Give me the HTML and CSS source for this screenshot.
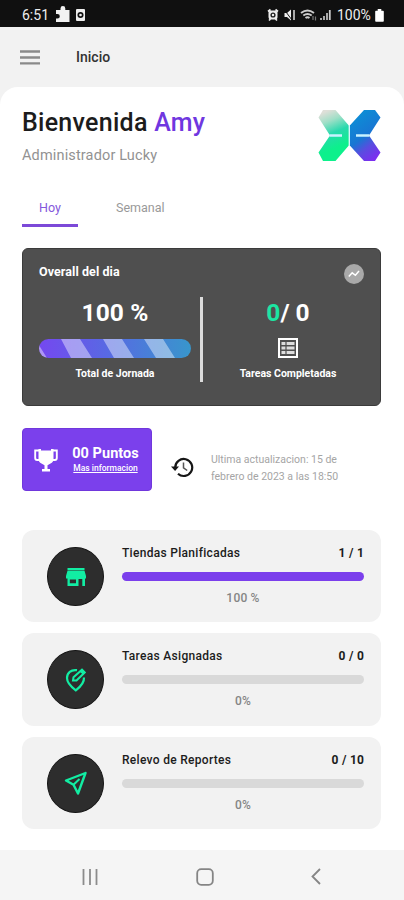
FILE: index.html
```html
<!DOCTYPE html>
<html lang="es">
<head>
<meta charset="utf-8">
<title>Inicio</title>
<link rel="stylesheet" href="styles.css">
</head>
<body>
<div class="status">
  <span class="clock">6:51</span>
  <svg class="puzzle" width="16" height="18" viewBox="0 0 16 18"><path d="M1 5h4.500V3.500a2.400 2.400 0 0 1 4.800 0V5H14.500V17H1V13.500h1.500a2.300 2.300 0 0 0 0-4.600H1z" fill="#f2f2f2"/></svg>
  <svg class="app" width="9" height="12" viewBox="0 0 9 12"><rect width="9" height="12" rx="1" fill="#eee"/><circle cx="4.500" cy="6" r="2.200" fill="#eee" stroke="#111" stroke-width="1.700"/></svg>
  <svg class="tray" width="66" height="14" viewBox="0 0 66 14">
    <path d="M1 3.500 3.500 1.500M11 3.500 8.500 1.500M2 12.500l1.500-1.500M10 12.500 8.500 11" stroke="#eee" stroke-width="1.700"/><rect x="1.500" y="2.500" width="9" height="9" rx="2.500" fill="#eee"/><circle cx="6" cy="7" r="1.900" fill="none" stroke="#222" stroke-width="1.400"/>
    <path d="M17.500 5h2.500l4-3.500v11L20 9h-2.500z" fill="#eee"/><path d="M17.500 2 25 12" stroke="#111" stroke-width="1"/><path d="M27 2v10" stroke="#ddd" stroke-width="1.500"/>
    <g fill="none" stroke="#ccc" stroke-width="1.900"><path d="M34 5q6.500-5 13 0M36.300 7.500q4.200-3 8.400 0M38.500 10q2-1.500 4 0"/></g><path d="M46 8v4M48.500 8.500v4" stroke="#777" stroke-width="1.200"/>
    <path d="M54 12v-2M57 12V8M60 12V5" stroke="#aaa" stroke-width="2"/><path d="M62.800 12V2" stroke="#ccc" stroke-width="1.800"/>
  </svg>
  <span class="charge">100%</span>
  <svg width="9" height="13" viewBox="0 0 9 13"><path d="M2.700 0h3.600v1.700H8q.8 0 .8.800V12q0 .8-.8.800H1Q.2 12.800.2 12V2.500q0-.8.800-.8h1.700z" fill="#fff"/></svg>
</div>
<header class="topbar">
  <svg width="20" height="15" viewBox="0 0 20 15"><path d="M0 1.500h20M0 7.500h20M0 13.300h20" stroke="#8a8a8a" stroke-width="2.300"/></svg>
  <span class="page">Inicio</span>
</header>
<main class="sheet">
  <section class="welcome">
    <div>
      <h1>Bienvenida <em>Amy</em></h1>
      <p class="role">Administrador Lucky</p>
    </div>
    <svg class="logo" width="64" height="53" viewBox="0 0 64 53">
      <defs>
        <linearGradient id="lg" x1=".15" y1="0" x2=".4" y2="1"><stop offset=".05" stop-color="#dedfd8"/><stop offset=".25" stop-color="#a0dfc7"/><stop offset=".5" stop-color="#27d9ad"/><stop offset=".8" stop-color="#0df08c"/></linearGradient>
        <linearGradient id="rg" x1=".3" y1="0" x2=".75" y2="1"><stop offset=".1" stop-color="#0e8bd5"/><stop offset=".5" stop-color="#1976d3"/><stop offset=".72" stop-color="#5a4ce0"/><stop offset="1" stop-color="#7d2df0"/></linearGradient>
      </defs>
      <path d="M1.500 8.500 6 1h12.500L31.800 16.500v20L18.500 52H6L1.500 43.500 13 26.500z" fill="url(#lg)"/>
      <path d="M63.500 8.500 58 1H47L32.800 16.500v20L47 52h11l5.500-8.500L52 26.500z" fill="url(#rg)"/>
      <path d="M12.500 26.500h12.500M39 26.500h13.500" stroke="#c9f2ff" stroke-width="2.600"/><path d="M32.300 16v21" stroke="#d5f5ff" stroke-width="1"/>
    </svg>
  </section>
  <nav class="tabs"><span class="tab active">Hoy</span><span class="tab">Semanal</span></nav>
  <section class="overall">
    <div class="overall-head">
      <h2>Overall del dia</h2>
      <svg width="20" height="20" viewBox="0 0 20 20"><circle cx="10" cy="10" r="10" fill="#a9a9a9"/><path d="m4.800 12.500 3.400-3.700 3.200 2.500L15 7" fill="none" stroke="#fff" stroke-width="1.500"/></svg>
    </div>
    <div class="overall-body">
      <div class="stat">
        <strong class="num workday">100 %</strong>
        <svg class="stripes" width="152" height="19" viewBox="0 0 152 19">
          <defs><linearGradient id="bar"><stop stop-color="#7548ef"/><stop offset=".45" stop-color="#5869e3"/><stop offset="1" stop-color="#3896cc"/></linearGradient></defs>
          <rect width="152" height="19" fill="url(#bar)"/>
          <path d="M-18 0H-4L8 19H-10zM22 0H41L53 19H32zM64 0H83L95 19H75zM105 0H124L136 19H117z" fill="#fff" opacity=".42"/>
        </svg>
        <span class="cap">Total de Jornada</span>
      </div>
      <div class="rule"></div>
      <div class="stat">
        <strong class="num"><em>0</em>/ 0</strong>
        <svg class="table" width="20" height="20" viewBox="0 0 20 20"><rect x="1" y="1" width="18" height="18" fill="#4f4f4f" stroke="#fff" stroke-width="2"/><path d="M3.500 5.500H16.500M3.500 10H16.500M3.500 14.500H16.500" stroke="#ddd" stroke-width="2.800"/><path d="M8 3v14" stroke="#4f4f4f" stroke-width="1.200"/></svg>
        <span class="cap">Tareas Completadas</span>
      </div>
    </div>
  </section>
  <section class="info">
    <div class="points">
      <svg width="24" height="24" viewBox="0 0 24 24"><path d="M5 2.500H1.200V10q0 2 2 2H7M19 2.500h3.800V10q0 2-2 2H17" fill="none" stroke="#fff" stroke-width="1.900"/><path d="M4.500 1H7v1.500h10V1h2.500v10q0 3-3 4.500l-3 1.700V21H16v2.500H8V21h2.500v-3.800l-3-1.700Q4.500 14 4.500 11z" fill="#fff"/></svg>
      <div class="points-text"><strong>00 Puntos</strong><a>Mas informacion</a></div>
    </div>
    <svg class="history" width="23" height="21" viewBox="0 0 23 21"><path d="M4.200 10.500A8.500 8.500 0 1 1 7 16.800" fill="none" stroke="#161616" stroke-width="2.200"/><path d="M0 9.500H8L4.100 14z" fill="#161616"/><path d="M12.500 5.500v5.300l3.700 2.700" fill="none" stroke="#555" stroke-width="1.500"/></svg>
    <p class="updated">Ultima actualizacion: 15 de<br>febrero de 2023 a las 18:50</p>
  </section>
  <section class="list">
    <article class="item">
      <div class="disc"><svg width="20" height="20" viewBox="0 0 20 20"><path d="M1.500 1h17v2.200h-17zM1.500 3.800h17L20 9v2.500h-1V19h-2.700v-7h-3.800v7h-11v-7.500H0V9zM3.800 12.500v3.700h6.200v-3.700z" fill="#12eda3" fill-rule="evenodd"/></svg></div>
      <div class="detail"><div class="row"><span>Tiendas Planificadas</span><b>1 / 1</b></div><div class="bar full"></div><span class="pct">100 %</span></div>
    </article>
    <article class="item">
      <div class="disc"><svg width="22" height="24" viewBox="0 0 22 24"><path d="M12 2.200C6 1.200 2 5 2 10c0 4 3 8 8.800 12.300C16.500 18 19.300 14 19 9.500" fill="none" stroke="#12eda3" stroke-width="2.200"/><path d="m8 12.500.5-3.300 8.500-7.500 2.700 2.700-8.200 8z" fill="none" stroke="#12eda3" stroke-width="2"/><path d="m15 4 2.500-2.800 3 3L18 6.500z" fill="#12eda3"/></svg></div>
      <div class="detail"><div class="row"><span>Tareas Asignadas</span><b>0 / 0</b></div><div class="bar"></div><span class="pct">0%</span></div>
    </article>
    <article class="item">
      <div class="disc"><svg width="24" height="25" viewBox="0 0 24 25"><path d="M21.500 2 2 9.500l7.500 4.300L14 22.500z" fill="none" stroke="#12eda3" stroke-width="2.400" stroke-linejoin="round"/><path d="m9.500 13.800 6-5.800" stroke="#12eda3" stroke-width="2"/></svg></div>
      <div class="detail"><div class="row"><span>Relevo de Reportes</span><b>0 / 10</b></div><div class="bar"></div><span class="pct">0%</span></div>
    </article>
  </section>
</main>
<footer class="nav">
  <svg width="16" height="16" viewBox="0 0 16 16"><path d="M1.500 0v16M8 0v16M14.500 0v16" stroke="#8c8c8c" stroke-width="1.800"/></svg>
  <svg width="18" height="18" viewBox="0 0 18 18"><rect x="1.200" y="1.200" width="15.600" height="15.600" rx="4" fill="none" stroke="#858585" stroke-width="1.800"/></svg>
  <svg width="10" height="17" viewBox="0 0 10 17"><path d="M9 1 1.500 8.500 9 16" fill="none" stroke="#858585" stroke-width="1.800"/></svg>
</footer>
</body>
</html>
```

FILE: styles.css
```css
* { box-sizing: border-box; margin: 0; padding: 0; }
body { width: 404px; height: 900px; overflow: hidden; background: #f2f2f2; font-family: Roboto, "Liberation Sans", sans-serif; display: flex; flex-direction: column; color: #1c1c1c; }
svg { display: block; flex: none; }
em { font-style: normal; }
span, strong, h1, h2, b, a { white-space: nowrap; }

.status { height: 27px; flex: none; background: #101010; color: #eee; display: flex; align-items: center; padding: 3px 20px 0 22px; }
.clock { font-size: 14px; width: 27px; }
.puzzle { margin: -2px 5px 0 6px; }
.tray { margin-left: auto; margin-right: 4px; }
.charge { font-size: 14px; width: 35px; margin-right: 3px; }

.topbar { height: 60px; flex: none; display: flex; align-items: center; padding-left: 20px; }
.page { font-size: 14px; font-weight: 500; color: #333; margin-left: 36px; }

.sheet { flex: 1; background: #fff; border-radius: 18px 18px 0 0; padding: 0 23px 0 22px; }
.welcome { height: 99px; display: flex; justify-content: space-between; padding-top: 20px; }
h1 { font-size: 25px; line-height: 30px; font-weight: 500; letter-spacing: .27px; padding-top: 1px; }
h1 em { color: #7037e0; }
.role { font-size: 14.5px; line-height: 20px; color: #929292; margin-top: 8px; letter-spacing: .15px; }
.logo { margin-top: 2px; }

.tabs { height: 41px; display: flex; gap: 22px; }
.tab { height: 41px; padding: 14px 16px 0; font-size: 12.5px; line-height: 16px; color: #999; }
.tab.active { width: 56px; padding-left: 17px; color: #8458dc; border-bottom: 3px solid #7c49d8; }

.overall { height: 158px; margin-top: 21px; background: #4f4f4f; border: 1px solid #3b3b3b; border-radius: 6px; color: #fff; padding: 15px 16px 0; }
.overall-head { display: flex; justify-content: space-between; height: 33px; }
h2 { font-size: 12.5px; line-height: 16px; font-weight: 700; letter-spacing: .07px; }
.overall-body { display: flex; }
.stat { width: 152px; display: flex; flex-direction: column; align-items: center; }
.num { font-size: 24.5px; line-height: 31px; font-weight: 700; }
.workday { letter-spacing: .15px; }
.num em { color: #1ce5a3; }
.stripes { margin-top: 11px; border-radius: 10px; }
.table { margin-top: 10px; }
.cap { font-size: 10.5px; line-height: 14px; font-weight: 700; margin-top: 9px; }
.rule { width: 3px; height: 85px; background: #dcdcdc; margin: 0 9px; }

.info { display: flex; height: 63px; margin-top: 22px; }
.points { width: 130px; background: #7b40ec; border: 1px solid #7037dc; border-radius: 4px; color: #fff; display: flex; padding: 17px 0 0 11px; }
.points svg { margin-top: 2px; }
.points-text { width: 69px; margin-left: 13px; display: flex; flex-direction: column; align-items: center; }
.points-text strong { font-size: 14.5px; line-height: 16px; letter-spacing: .05px; }
.points-text a { font-size: 8.5px; line-height: 13px; font-weight: 500; text-decoration: underline; }
.history { margin: 29px 0 0 19px; }
.updated { font-size: 10.5px; line-height: 17px; color: #a5a5a5; margin: 23px 0 0 17px; white-space: nowrap; }

.list { margin-top: 39px; display: flex; flex-direction: column; gap: 10.9px; }
.item { height: 92.4px; background: #f2f2f2; border-radius: 12px; display: flex; padding: 17px 17px 0 25px; }
.disc { width: 57px; height: 59px; border-radius: 50%; background: #2d2d2d; border: 1px solid #151515; display: flex; align-items: center; justify-content: center; }
.detail { width: 242px; margin-left: 18px; display: flex; flex-direction: column; align-items: center; }
.row { align-self: stretch; display: flex; justify-content: space-between; font-size: 12px; line-height: 16px; font-weight: 500; margin-top: -2px; letter-spacing: .3px; }
.row b { font-weight: 700; margin-right: -.3px; }
.bar { align-self: stretch; height: 9px; border-radius: 5px; background: #d9d9d9; margin-top: 11px; }
.bar.full { background: #7b3fec; }
.pct { font-size: 12px; line-height: 16px; font-weight: 500; color: #858585; margin-top: 9px; letter-spacing: .2px; }

.nav { height: 50px; flex: none; background: #f5f5f5; display: flex; align-items: center; justify-content: space-between; padding: 3px 83px 0 82px; }
```
